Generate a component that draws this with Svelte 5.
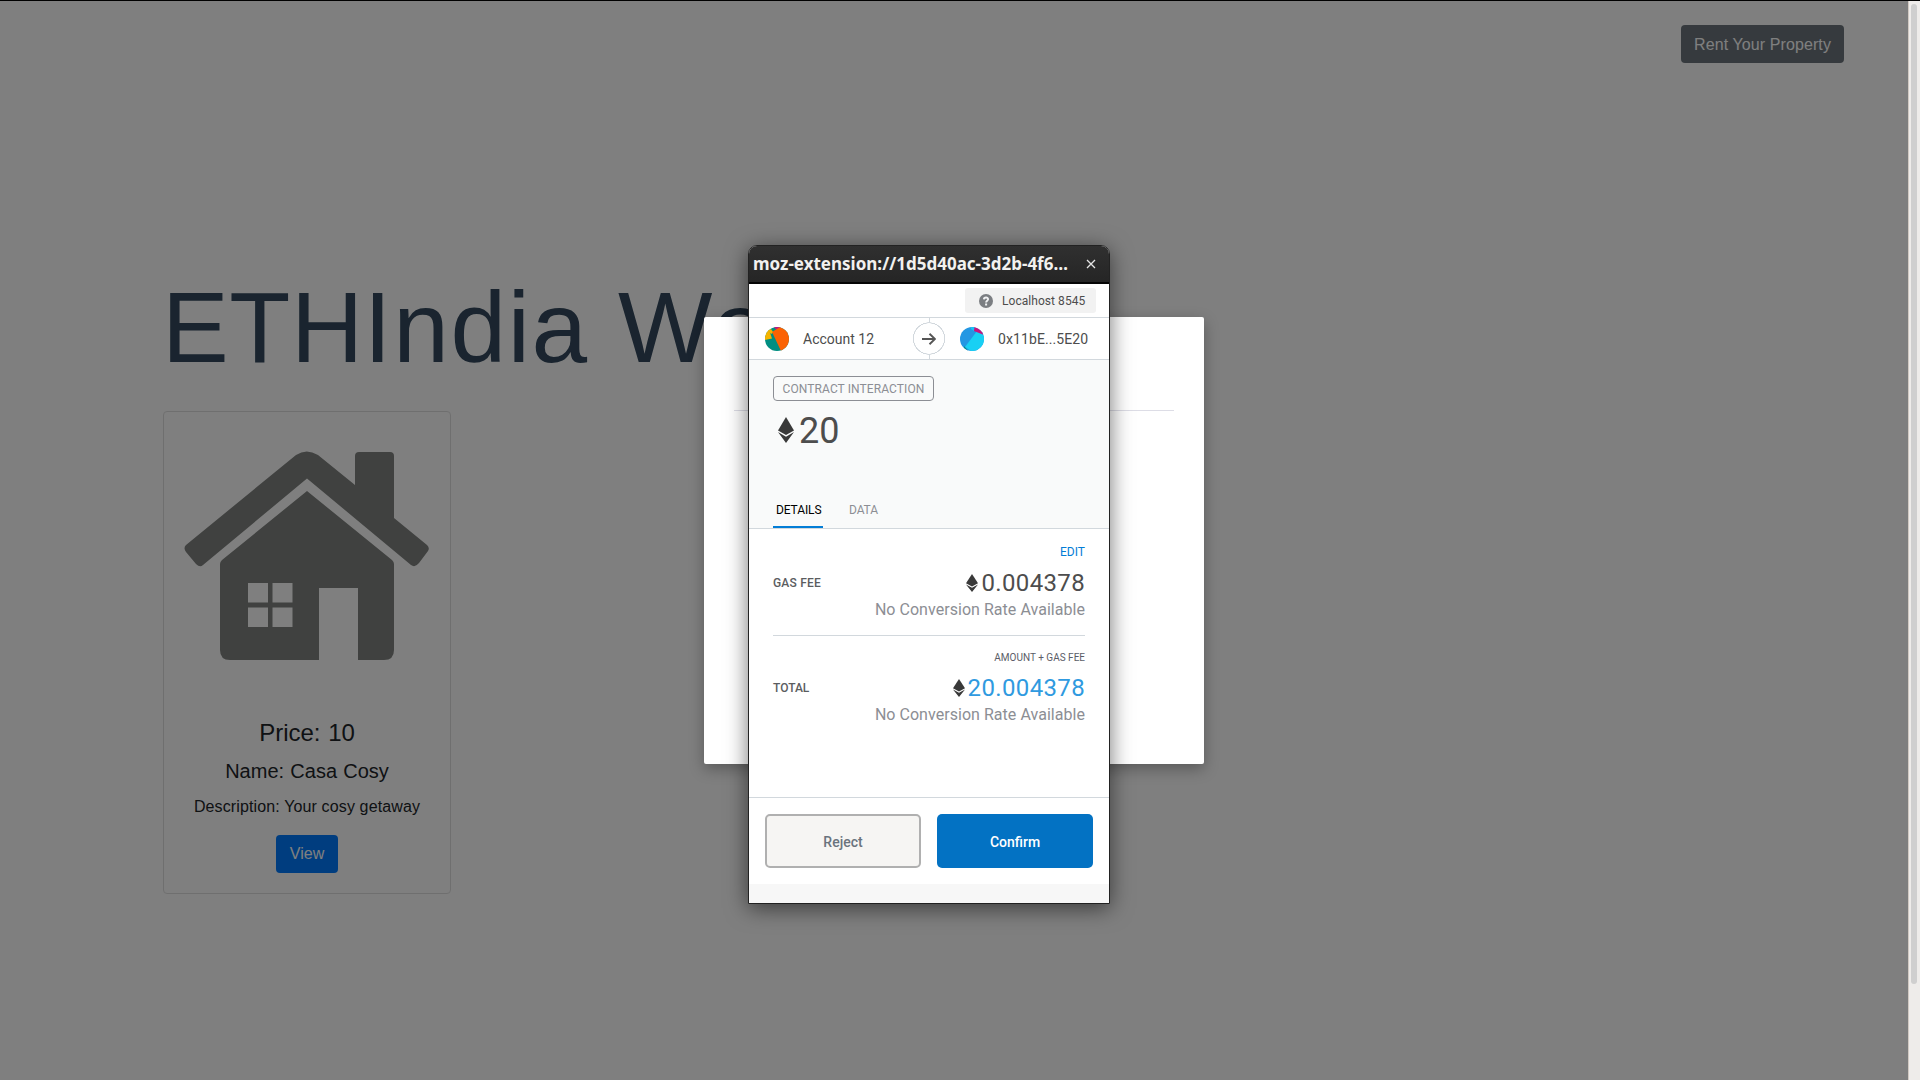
<script>
  const rows = [
    { label: 'GAS FEE', note: 'EDIT', value: '0.004378', kind: 'gas' },
    { label: 'TOTAL', note: 'AMOUNT + GAS FEE', value: '20.004378', kind: 'total' },
  ];
</script>

{#snippet eth(size)}
  <svg class="eth {size}" viewBox="0 0 16 26" preserveAspectRatio="none">
    <path d="M8 0 16 13.4 8 18.1 0 13.4Z" />
    <path d="M0 15 8 19.7 16 15 8 26Z" />
  </svg>
{/snippet}

<div class="screen">
  <main class="page">
    <nav><button class="btn grey">Rent Your Property</button></nav>
    <h1><span class="caps">ETH</span><span class="rest">India Wo</span></h1>
    <article class="card">
      <svg class="house" viewBox="0 -1 246 246">
        <path d="M112 22Q122.500 15 134 22L171 52V23Q171 19 175 19H206Q210 19 210 23V85L243 112Q246 115 244 118L235 130Q231 135 227 132L123 45.500 19 132Q16 135 12 131L2 119Q-1 115 2 112Z" />
        <path fill-rule="evenodd" d="M123 58 208 127Q210 129 210 131V217Q210 227 200 227H174V155H135V227H46Q36 227 36 217V131Q36 129 38 127ZM64 150V169.500H84V150ZM88.500 150V169.500H108.500V150ZM64 174.500V194H84V174.500ZM88.500 174.500V194H108.500V174.500Z" />
      </svg>
      <h4>Price: 10</h4>
      <h5>Name: Casa Cosy</h5>
      <p>Description: Your cosy getaway</p>
      <button class="btn blue">View</button>
    </article>
  </main>
  <div class="scrollbar"><div class="thumb"></div></div>
  <div class="backdrop"></div>
  <div class="topline"></div>

  <div class="modal"><div class="rule"></div></div>

  <section class="window">
    <header>
      <span class="title">moz-extension://1d5d40ac-3d2b-4f6…</span>
      <svg class="close" viewBox="0 0 10 10"><path d="M1 1 9 9M9 1 1 9" /></svg>
    </header>
    <div class="network">
      <div class="chip">
        <svg viewBox="0 0 14 14">
          <circle cx="7" cy="7" r="7" fill="#7b7e82" />
          <path d="M4.900 5.400C5 2.800 9.200 2.900 9.100 5.300 9 6.700 7.100 6.800 7.100 8.500" fill="none" stroke="#f2f3f4" stroke-width="1.900" />
          <rect x="6.100" y="9.500" width="2" height="2" fill="#f2f3f4" />
        </svg>
        <span>Localhost 8545</span>
      </div>
    </div>
    <div class="parties">
      <svg class="avatar" viewBox="0 0 24 24">
        <clipPath id="left"><circle cx="12" cy="12" r="12" /></clipPath>
        <g clip-path="url(#left)">
          <rect width="24" height="24" fill="#018e81" />
          <path d="M0 0H3L7 11.500 0 13Z" fill="#f5b400" />
          <path d="M3 3 6 2 8.500 5.500 6 7Z" fill="#f5b400" />
          <path d="M9 0H16L14 2.500 10 1.800Z" fill="#c8147d" />
          <path d="M7 5 15 0H24V24H16Z" fill="#fb6203" />
        </g>
      </svg>
      <span class="from">Account 12</span>
      <div class="arrow">
        <svg viewBox="0 0 14 12"><path d="M0 6H13M7.500 .700 13 6 7.500 11.300" /></svg>
      </div>
      <svg class="avatar" viewBox="0 0 24 24">
        <clipPath id="right"><circle cx="12" cy="12" r="12" /></clipPath>
        <g clip-path="url(#right)">
          <rect width="24" height="24" fill="#2397e3" />
          <path d="M17 4 5 20 14 26 28 14V6Z" fill="#18d0f4" />
          <path d="M11 0 15 0 14 4 11 2Z" fill="#18c3f4" />
          <path d="M14.500 0 24 0V8L14 4Z" fill="#c8147d" />
          <path d="M4 19 9 25H4Z" fill="#018e81" />
        </g>
      </svg>
      <span class="to">0x11bE...5E20</span>
    </div>
    <div class="summary">
      <div class="badge">CONTRACT INTERACTION</div>
      <div class="amount">{@render eth('big')}<span>20</span></div>
      <div class="tabs"><span class="active">DETAILS</span><span>DATA</span></div>
    </div>
    <div class="details">
      {#each rows as row}
        <div class="row {row.kind}">
          <div class="note">{row.note}</div>
          <div class="line">
            <span class="label">{row.label}</span>
            <span class="value">{@render eth('small')}<span>{row.value}</span></span>
          </div>
          <div class="rate">No Conversion Rate Available</div>
        </div>
      {/each}
    </div>
    <footer>
      <button class="reject">Reject</button>
      <button class="confirm">Confirm</button>
    </footer>
  </section>
</div>

<style>
  :global(body) { margin: 0; overflow: hidden; }
  * { box-sizing: border-box; }
  .screen { position: relative; width: 1920px; height: 1080px; overflow: hidden; display: flex; background: #fff; font-family: 'Liberation Sans', Arial, sans-serif; color: #212529; }
  .page { width: 1908px; height: 1080px; }
  nav { display: flex; justify-content: flex-end; padding: 25px 64px 0 0; }
  .btn { height: 38px; border: 0; border-radius: 4px; padding: 0; color: #fff; font: 16px/24px 'Liberation Sans', Arial, sans-serif; }
  .grey { width: 163px; padding-top: 2px; background: #6c757d; letter-spacing: .1px; }
  .blue { width: 62px; background: #007bff; }
  h1 { margin: 204px 0 0 162px; height: 120px; font-size: 100px; line-height: 120px; font-weight: 400; color: #34495e; white-space: nowrap; }
  .caps { letter-spacing: .6px; }
  .rest { letter-spacing: 1.600px; }
  .card { width: 288px; height: 483px; margin: 24px 0 0 163px; padding: 20px; border: 1px solid #dfdfdf; border-radius: 4px; display: flex; flex-direction: column; align-items: center; }
  .house { flex: none; width: 246px; height: 246px; fill: #808380; }
  h4 { margin: 40px 0 0; font-size: 24px; line-height: 29px; font-weight: 400; word-spacing: 1px; }
  h5 { margin: 12px 0 0; font-size: 20px; line-height: 24px; font-weight: 400; word-spacing: .7px; }
  p { margin: 12px 0 16px; font-size: 16px; line-height: 24px; letter-spacing: .13px; white-space: nowrap; }
  .scrollbar { width: 12px; height: 1080px; padding: 4px 0 0 2px; background: #eeecea; border-left: 1px solid #d2cac3; }
  .thumb { width: 6px; height: 980px; border-radius: 3px; background: #cfcfcf; }
  .backdrop { position: absolute; inset: 0 12px 0 0; background: rgba(0, 0, 0, .5); }
  .topline { position: absolute; inset: 0 0 auto; height: 1px; background: #000; }
  .modal { position: absolute; left: 704px; top: 317px; width: 500px; height: 447px; padding: 93px 30px 0; background: #fff; border-radius: 2px; box-shadow: 0 5px 15px rgba(0, 0, 0, .3); }
  .rule { height: 1px; background: #dddde6; }

  .window { position: absolute; left: 748px; top: 245px; width: 362px; height: 659px; display: flex; flex-direction: column; border: 1px solid #222; border-radius: 9px 9px 0 0; overflow: hidden; background: #f7f7f7; box-shadow: 0 4px 22px rgba(0, 0, 0, .55); font-family: Roboto, sans-serif; color: #4d4d4d; }
  header { flex: none; height: 38px; padding: 0 13px 0 4px; display: flex; align-items: center; justify-content: space-between; background: linear-gradient(#303030, #252525); border-bottom: 2px solid #050505; }
  .title { font: 700 17px/36px 'Noto Sans', sans-serif; color: #f2f1ef; white-space: nowrap; }
  .close { flex: none; width: 10px; height: 10px; fill: none; stroke: #e5e5e5; stroke-width: 1.300; }
  .network { flex: none; height: 33px; padding: 4px 13px 0 0; display: flex; justify-content: flex-end; background: #fff; }
  .chip { width: 131px; height: 25px; padding: 0 10px 0 14px; display: flex; align-items: center; gap: 9px; border-radius: 3px; background: #f2f2f2; font-size: 12px; letter-spacing: .05px; white-space: nowrap; }
  .chip svg { flex: none; width: 14px; height: 14px; }
  .parties { flex: none; height: 43px; padding: 0 16px; display: flex; align-items: center; background: #fff; border: solid #d2d8dd; border-width: 1px 0; font-size: 14px; white-space: nowrap; }
  .avatar { flex: none; width: 24px; height: 24px; }
  .from { width: 110px; padding-left: 14px; margin-right: 14px; }
  .arrow { width: 32px; height: 41px; margin-right: 15px; display: flex; align-items: center; justify-content: center; background: radial-gradient(circle, #fff 15px, #d2d8dd 15.300px, #d2d8dd 16px, transparent 16.300px), linear-gradient(#d2d8dd, #d2d8dd) 16px 0 / 1px 100% no-repeat; }
  .arrow svg { width: 14px; height: 12px; fill: none; stroke: #555; stroke-width: 1.900; }
  .to { padding-left: 14px; letter-spacing: .1px; }
  .summary { flex: none; height: 169px; padding: 16px 24px 0; display: flex; flex-direction: column; align-items: flex-start; background: #f9fafa; border-bottom: 1px solid #d2d8dd; }
  .badge { width: 161px; height: 25px; padding-top: 1px; border: 1px solid #8c8e94; border-radius: 4px; font-size: 12px; line-height: 23px; letter-spacing: .1px; text-align: center; color: #8c8e94; white-space: nowrap; }
  .amount { height: 42px; margin: 8px 0 0 5px; display: flex; align-items: center; gap: 5px; font-size: 36px; line-height: 42px; }
  .amount span { padding-top: 2px; }
  .eth { flex: none; fill: #393939; }
  .big { width: 16px; height: 26px; }
  .small { width: 12px; height: 18px; margin-right: 3px; }
  .tabs { margin-top: auto; display: flex; gap: 23px; font-size: 12px; line-height: 14px; letter-spacing: -.1px; color: #8c8e94; }
  .tabs span { padding: 0 3px 9px; border-bottom: 2px solid transparent; }
  .tabs .active { width: 50px; padding-right: 0; border-color: #037dd6; color: #000; }
  .details { height: 268px; padding: 0 24px; background: #fff; }
  .row { text-align: right; }
  .gas { height: 107px; padding-top: 15px; border-bottom: 1px solid #d2d8dd; }
  .total { padding-top: 14px; }
  .note { height: 23px; font-size: 12px; line-height: 16px; color: #037dd6; }
  .total .note { height: 22px; font-size: 10px; color: #5b5d67; }
  .line { display: flex; align-items: center; justify-content: space-between; height: 32px; }
  .label { font-size: 12px; font-weight: 500; color: #5b5d5f; }
  .gas .label { letter-spacing: .2px; }
  .value { display: flex; align-items: center; font-size: 24px; letter-spacing: .35px; }
  .total .value { color: #2f9ae0; }
  .rate { font-size: 16px; line-height: 22px; letter-spacing: .04px; color: #8c8e94; }
  footer { flex: none; height: 87px; padding: 16px; display: flex; gap: 16px; background: #fff; border-top: 1px solid #d2d8dd; }
  footer button { width: 156px; height: 54px; padding: 2px 0 0; border-radius: 5px; font: 500 14px Roboto, sans-serif; }
  .reject { border: 2px solid #b0b0b0; background: #f6f5f3; color: #6a737d; }
  .confirm { border: 0; background: #0372c3; color: #fff; }
</style>
